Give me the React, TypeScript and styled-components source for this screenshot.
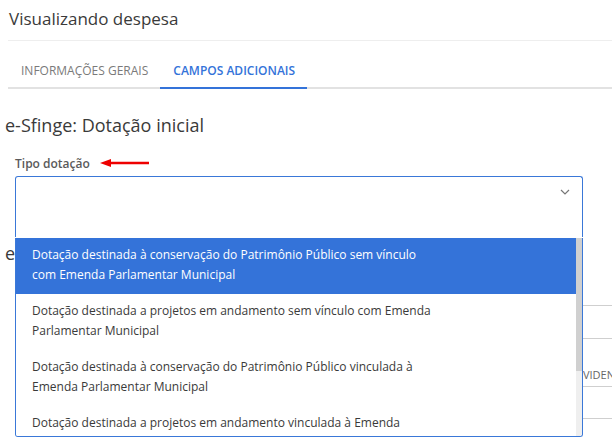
import React from 'react'
import styled, { createGlobalStyle } from 'styled-components'

const GlobalStyle = createGlobalStyle`
  body {
    margin: 0;
    background: #fff;
    font-family: 'Open Sans', 'Noto Sans', sans-serif;
    color: #333;
  }
`

const options = [
  'Dotação destinada à conservação do Patrimônio Público sem vínculo com Emenda Parlamentar Municipal',
  'Dotação destinada a projetos em andamento sem vínculo com Emenda Parlamentar Municipal',
  'Dotação destinada à conservação do Patrimônio Público vinculada à Emenda Parlamentar Municipal',
  'Dotação destinada a projetos em andamento vinculada à Emenda Parlamentar Municipal',
]

const Page = styled.div`
  width: 612px;
  height: 447px;
  overflow: hidden;
`

const Header = styled.div`
  margin-left: 8px;
  height: 40px;
  display: flex;
  align-items: center;
  border-bottom: 1px solid #eeeeee;
`

const Title = styled.h1`
  margin: 0 0 4px 1px;
  font-size: 17px;
  font-weight: 400;
  color: #3a3a3a;
`

const Tabs = styled.div`
  margin-left: 8px;
  height: 46px;
  display: flex;
  border-bottom: 2px solid #e2e2e2;
`

const Tab = styled.div<{ $active?: boolean }>`
  display: flex;
  align-items: center;
  padding: 14px 12px 2px 13px;
  margin-bottom: -2px;
  font-size: 12px;
  font-weight: ${(p) => (p.$active ? 600 : 400)};
  color: ${(p) => (p.$active ? '#3473d9' : '#7a7a7a')};
  border-bottom: 2px solid ${(p) => (p.$active ? '#3473d9' : 'transparent')};
`

const Section = styled.div`
  padding: 24px 0 0 5px;
`

const SectionTitle = styled.h2<{ $gap?: number }>`
  margin: ${(p) => p.$gap ?? 0}px 0 0;
  font-size: 18px;
  font-weight: 400;
  line-height: 24px;
  color: #3a3a3a;
`

const Field = styled.div`
  margin: 18px 29px 0 10px;
`

const LabelRow = styled.div`
  display: flex;
  align-items: center;
  gap: 9px;
  height: 16px;
`

const Label = styled.label`
  font-size: 12px;
  font-weight: 600;
  color: #5a5a5a;
`

const SelectBox = styled.div`
  position: relative;
  margin-top: 5px;
  height: 60px;
  border: 1px solid #3a78d8;
  border-bottom: none;
  border-radius: 3px 3px 0 0;
`

const Chevron = styled.svg`
  position: absolute;
  top: 12px;
  right: 12px;
`

const Menu = styled.div`
  position: absolute;
  top: 61px;
  left: -1px;
  right: -1px;
  height: 198px;
  display: flex;
  background: #fff;
  border: 1px solid #3a78d8;
  border-top: none;
  border-radius: 0 0 3px 3px;
  overflow: hidden;
  z-index: 2;
`

const OptionList = styled.div`
  flex: 1;
  overflow: hidden;
`

const Option = styled.div<{ $selected?: boolean }>`
  padding: 7px 16px 9px 16px;
  font-size: 12px;
  line-height: 20px;
  background: ${(p) => (p.$selected ? '#3473d9' : '#fff')};
  color: ${(p) => (p.$selected ? '#fff' : '#3a3a3a')};
`

const OptionText = styled.div`
  max-width: 400px;
`

const ScrollTrack = styled.div`
  width: 6px;
  background: #efefef;
`

const ScrollThumb = styled.div`
  height: 133px;
  background: #d0d0d0;
`

const Table = styled.div`
  margin: 40px 0 0 10px;
  border-top: 1px solid #cfcfcf;
`

const Row = styled.div<{ $h: number }>`
  height: ${(p) => p.$h}px;
  display: grid;
  grid-template-columns: 546px 1fr;
  align-items: end;
  border-bottom: 1px solid #cfcfcf;
`

const Cell = styled.div`
  padding-bottom: 4px;
  font-size: 11px;
  color: #666;
  white-space: nowrap;
  overflow: hidden;
`

export default function App() {
  return (
    <Page>
      <GlobalStyle />
      <Header>
        <Title>Visualizando despesa</Title>
      </Header>
      <Tabs>
        <Tab>INFORMAÇÕES GERAIS</Tab>
        <Tab $active>CAMPOS ADICIONAIS</Tab>
      </Tabs>
      <Section>
        <SectionTitle>e-Sfinge: Dotação inicial</SectionTitle>
        <Field>
          <LabelRow>
            <Label>Tipo dotação</Label>
            <svg width="52" height="10" viewBox="0 0 52 10">
              <line x1="10" y1="5" x2="50" y2="5" stroke="#e00" strokeWidth="2.5" />
              <polygon points="1,5 12,1 12,9" fill="#e00" />
            </svg>
          </LabelRow>
          <SelectBox>
            <Chevron width="10" height="6" viewBox="0 0 10 6">
              <polyline points="1,1 5,5 9,1" fill="none" stroke="#777" strokeWidth="1.2" />
            </Chevron>
            <Menu>
              <OptionList>
                {options.map((o, i) => (
                  <Option key={o} $selected={i === 0}>
                    <OptionText>{o}</OptionText>
                  </Option>
                ))}
              </OptionList>
              <ScrollTrack>
                <ScrollThumb />
              </ScrollTrack>
            </Menu>
          </SelectBox>
        </Field>
        <SectionTitle $gap={4}>e-Sfinge: Detalhamento</SectionTitle>
        <Table>
          <Row $h={32}>
            <Cell />
            <Cell />
          </Row>
          <Row $h={47}>
            <Cell />
            <Cell>PROVIDENCIAS</Cell>
          </Row>
          <Row $h={31}>
            <Cell />
            <Cell />
          </Row>
        </Table>
      </Section>
    </Page>
  )
}
